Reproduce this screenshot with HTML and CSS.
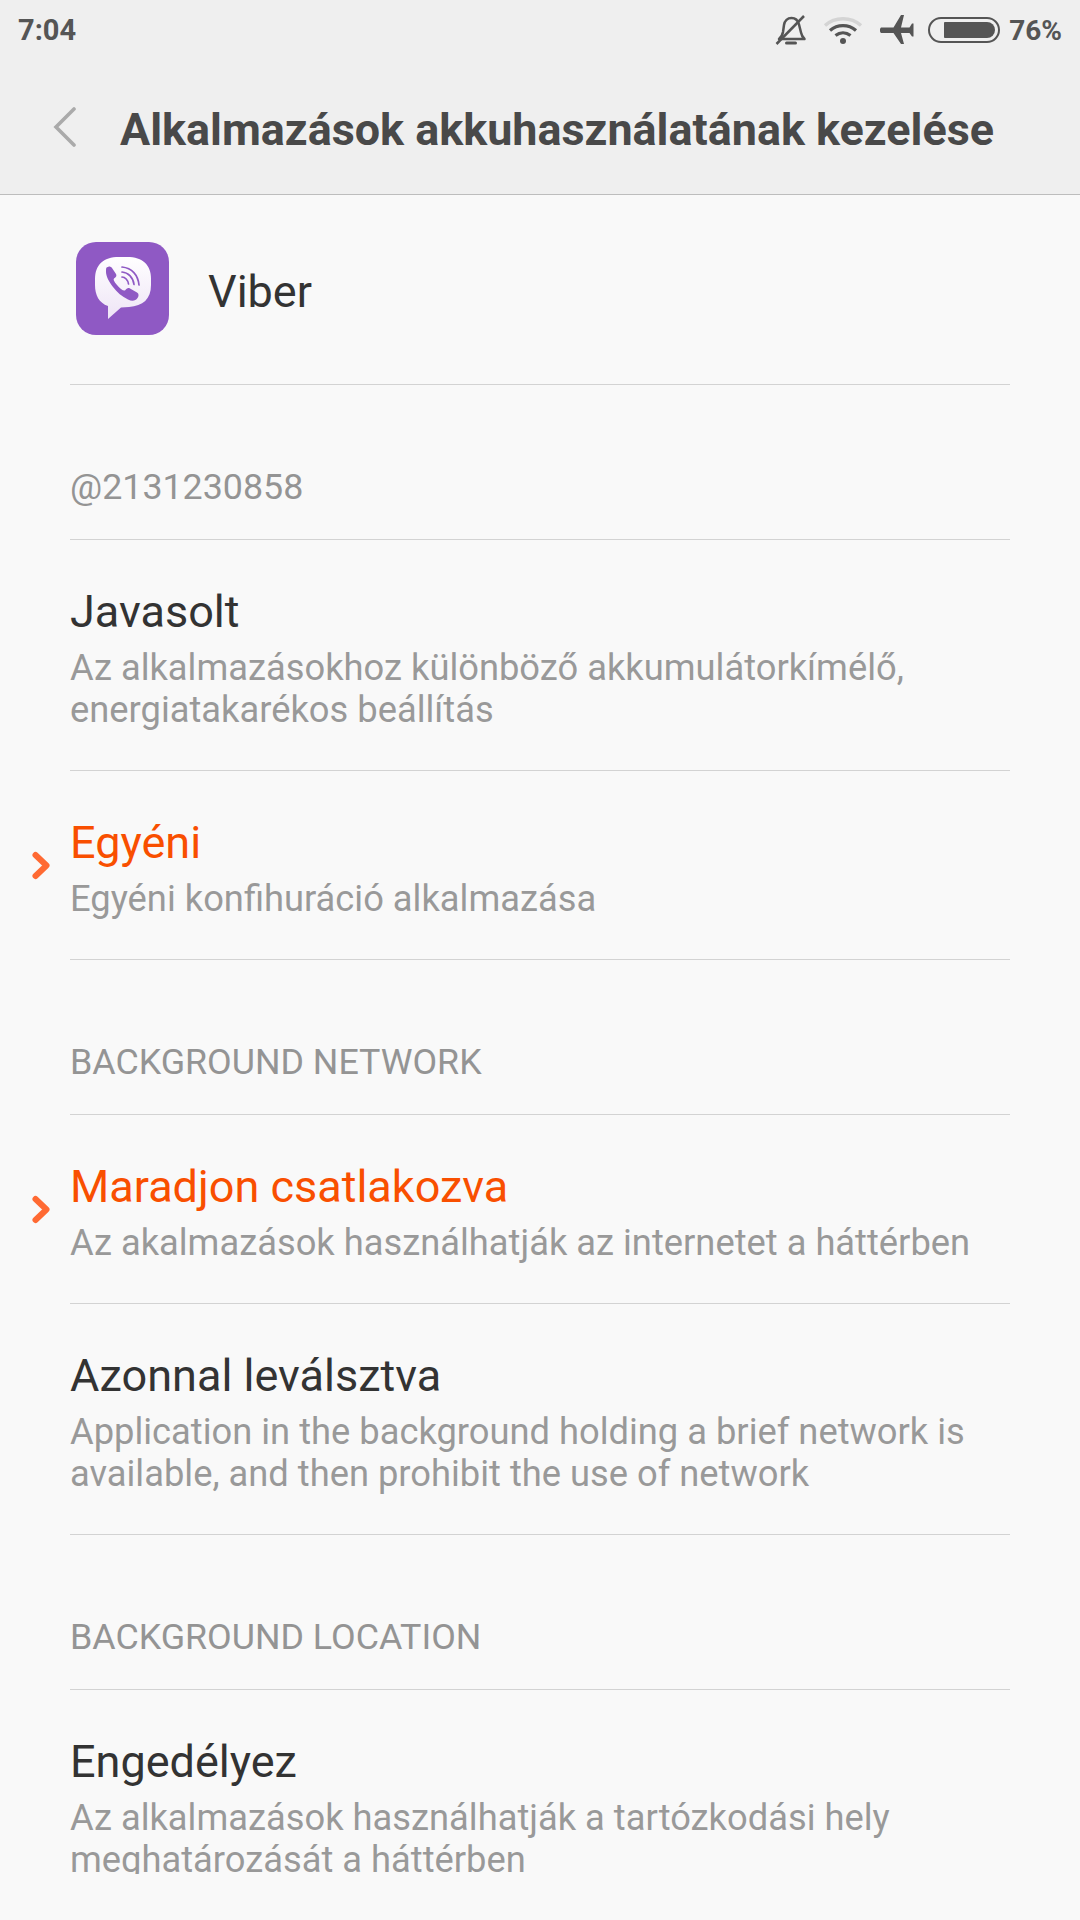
FILE: index.html
```html
<!DOCTYPE html>
<html lang="hu">
<head>
  <meta charset="UTF-8">
  <meta name="viewport" content="width=device-width, initial-scale=1.0">
  <title>Alkalmazások akkuhasználatának kezelése</title>
  <link rel="stylesheet" href="styles.css">
</head>
<body>
  <div class="top">
    <div class="status">
      <span class="time">7:04</span>
      <div class="status-icons">
        <svg class="ic-bell" width="32" height="32" viewBox="0 0 32 32">
          <path d="M4 25c2.500-2 3.500-4 4-7l1-7c.7-4 3.500-7 7.500-7s6.500 2.500 7.500 6.500l2 8c.5 2.500 2 5 3.500 6.500H4z" fill="none" stroke="#555" stroke-width="2.500" stroke-linejoin="round"/>
          <path d="M11.500 29h9" stroke="#555" stroke-width="3" stroke-linecap="round"/>
          <path d="M1.500 30L29 2" stroke="#555" stroke-width="2.500"/>
        </svg>
        <svg class="ic-wifi" width="40" height="32" viewBox="0 0 40 32">
          <path d="M2 11.500C12 2.500 28 2.500 38 11.500" fill="none" stroke="#d4d4d4" stroke-width="3.400"/>
          <path d="M7 16.500C14.500 10 25.500 10 33 16.500" fill="none" stroke="#555" stroke-width="3.200"/>
          <path d="M12.500 21.500C17 18 23 18 27.500 21.500" fill="none" stroke="#555" stroke-width="3.200"/>
          <circle cx="20" cy="27" r="3" fill="#555"/>
        </svg>
        <svg class="ic-plane" width="34" height="30" viewBox="0 0 34 30">
          <path d="M1 12.500h12.500L21 0h3l-3 12.500h8.500L32 8.500h1.500v13H32l-2.500-3.500H21L24 29h-3l-7.500-11H1c-1.500-1-1.500-4.500 0-5.500z" fill="#555"/>
        </svg>
        <div class="battery"><div class="battery-fill"></div></div>
        <span class="percent">76%</span>
      </div>
    </div>
    <div class="titlebar">
      <svg class="back" width="24" height="40" viewBox="0 0 24 40">
        <path d="M21 2L3 20l18 18" fill="none" stroke="#aaa" stroke-width="3.600" stroke-linecap="round"/>
      </svg>
      <h1>Alkalmazások akkuhasználatának kezelése</h1>
    </div>
  </div>

  <div class="list">
    <div class="app-row">
      <div class="app-icon">
        <svg width="56" height="62" viewBox="0 0 56 62">
          <defs>
            <linearGradient id="bubble" x1="0" y1="0" x2="0" y2="1">
              <stop offset="0" stop-color="#fff"/>
              <stop offset="1" stop-color="#eee4f6"/>
            </linearGradient>
          </defs>
          <path d="M24 0h8c16 0 24 8 24 22v6c0 14-8 21-22 22l-8 .5L13 62l0-13C4 46 0 38 0 28v-6C0 8 8 0 24 0z" fill="url(#bubble)"/>
          <path d="M11 11c2-2 4.500-2 6 0l4 6c1 2 0 3-2 4.500-1 1 0 3 3 6.500s6 6 8 5.500c1.500-2 3-3 5-2l7 4c2 1 2 3.500 .5 5.500-2 3-5.500 3.500-9.500 1.500-6-3-11-7-15-12.500-4-5-7-11-7-15 0-2 0-3.500 .5-4.500z" fill="#8f59c4"/>
          <path d="M27 10c10 1 16 8 17 18M27 15c6 .5 11 5 12 12.500M27 20c3 0 6 3 6.500 7" fill="none" stroke="#8f59c4" stroke-width="1.700" stroke-linecap="round"/>
        </svg>
      </div>
      <span class="app-name">Viber</span>
    </div>

    <div class="section">@2131230858</div>

    <div class="item">
      <div class="item-title">Javasolt</div>
      <div class="item-sub">Az alkalmazásokhoz különböző akkumulátorkímélő,<br>energiatakarékos beállítás</div>
    </div>
    <div class="item selected">
      <svg class="mark" width="22" height="32" viewBox="0 0 22 32">
        <path d="M4.500 5L15.500 15.500 4.500 26" fill="none" stroke="#ff6a33" stroke-width="6" stroke-linecap="round" stroke-linejoin="round"/>
      </svg>
      <div class="item-title">Egyéni</div>
      <div class="item-sub">Egyéni konfihuráció alkalmazása</div>
    </div>

    <div class="section">BACKGROUND NETWORK</div>

    <div class="item selected">
      <svg class="mark" width="22" height="32" viewBox="0 0 22 32">
        <path d="M4.500 5L15.500 15.500 4.500 26" fill="none" stroke="#ff6a33" stroke-width="6" stroke-linecap="round" stroke-linejoin="round"/>
      </svg>
      <div class="item-title">Maradjon csatlakozva</div>
      <div class="item-sub">Az akalmazások használhatják az internetet a háttérben</div>
    </div>
    <div class="item">
      <div class="item-title">Azonnal leválsztva</div>
      <div class="item-sub">Application in the background holding a brief network is<br>available, and then prohibit the use of network</div>
    </div>

    <div class="section">BACKGROUND LOCATION</div>

    <div class="item">
      <div class="item-title">Engedélyez</div>
      <div class="item-sub">Az alkalmazások használhatják a tartózkodási hely<br>meghatározását a háttérben</div>
    </div>
  </div>
</body>
</html>
```

FILE: styles.css
```css
* {
  box-sizing: border-box;
}

body {
  margin: 0;
  height: 1920px;
  overflow: hidden;
  background: #f9f9f9;
  font-family: Roboto, "Liberation Sans", sans-serif;
}

.top {
  height: 195px;
  background: #efefef;
  border-bottom: 1px solid #bdbdbd;
}

.status {
  height: 60px;
  padding: 0 18px;
  display: flex;
  align-items: center;
  justify-content: space-between;
  color: #555;
  font-size: 29px;
  font-weight: 700;
}

.status-icons {
  display: flex;
  align-items: center;
}

.ic-wifi {
  margin-left: 16px;
}

.ic-plane {
  margin-left: 17px;
}

.battery {
  width: 72px;
  height: 26px;
  margin-left: 14px;
  padding: 3px;
  border: 2px solid #555;
  border-radius: 13px;
  display: flex;
  justify-content: flex-end;
}

.battery-fill {
  width: 51px;
  background: #555;
  border-radius: 1px 9px 9px 1px;
}

.percent {
  margin-left: 9px;
  font-size: 28px;
}

.titlebar {
  height: 134px;
  padding: 5px 0 0 53px;
  display: flex;
  align-items: center;
}

.titlebar .back {
  margin-top: -5px;
}

.titlebar h1 {
  margin: 0 0 0 43px;
  color: #494949;
  font-size: 44.900px;
  font-weight: 700;
}

.list {
  height: 1679px;
  padding: 0 70px;
  overflow: hidden;
}

.app-row {
  height: 190px;
  padding-left: 6px;
  border-bottom: 1px solid #d3d3d3;
  display: flex;
  align-items: center;
}

.app-icon {
  width: 93px;
  height: 93px;
  margin-top: -3px;
  background: #8f59c4;
  border-radius: 20px;
  display: flex;
  align-items: center;
  justify-content: center;
}

.app-name {
  margin-left: 39px;
  padding-top: 4px;
  color: #333;
  font-size: 45px;
}

.section {
  height: 155px;
  padding-bottom: 31px;
  border-bottom: 1px solid #d3d3d3;
  display: flex;
  align-items: flex-end;
  color: #949494;
  font-size: 35.800px;
}

.item {
  position: relative;
  padding: 44px 0 39px;
  border-bottom: 1px solid #d3d3d3;
}

.item-title {
  color: #333;
  font-size: 45px;
  line-height: 56px;
}

.item-sub {
  margin-top: 7px;
  color: #999;
  font-size: 36.300px;
  line-height: 42px;
}

.selected .item-title {
  color: #f94f00;
}

.mark {
  position: absolute;
  left: -39px;
  top: 79px;
}

.list .item:last-child {
  border-bottom: 0;
}
```
